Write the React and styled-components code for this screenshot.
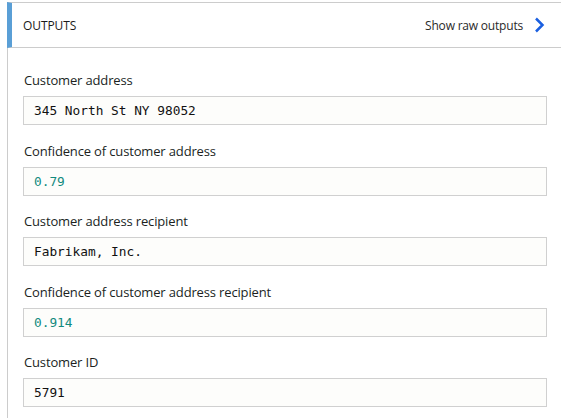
import styled, { createGlobalStyle } from "styled-components";

const GlobalStyle = createGlobalStyle`
  body {
    margin: 0;
    background: #ffffff;
    font-family: "Open Sans", "Noto Sans", sans-serif;
  }
`;

const Panel = styled.section`
  margin: 2px 0 0 7px;
  border-left: 1px solid #cccccc;
  min-height: 416px;
`;

const Header = styled.header`
  display: flex;
  align-items: center;
  justify-content: space-between;
  height: 44px;
  border-top: 1px solid #cccccc;
  border-bottom: 1px solid #cccccc;
  border-left: 5px solid #5a9fd6;
  margin-left: -1px;
  padding: 0 16px 0 11px;
`;

const Title = styled.h2`
  margin: 0;
  font-size: 12px;
  font-weight: 400;
  color: #1a1a1a;
  letter-spacing: -0.1px;
`;

const RawLink = styled.button`
  display: flex;
  align-items: center;
  gap: 10px;
  border: none;
  background: none;
  padding: 0;
  font-family: inherit;
  font-size: 12px;
  color: #2a2a2a;
  letter-spacing: -0.2px;
  cursor: pointer;
`;

const Body = styled.div`
  display: flex;
  flex-direction: column;
  gap: 16.5px;
  padding: 23px 14px 0 15px;
`;

const Field = styled.div`
  display: flex;
  flex-direction: column;
  gap: 7px;
`;

const Label = styled.label`
  font-size: 13px;
  line-height: 18px;
  color: #201f1e;
  letter-spacing: -0.15px;
  padding-left: 1px;
`;

const Value = styled.div`
  box-sizing: border-box;
  height: 29px;
  display: flex;
  align-items: center;
  padding: 0 10px;
  border: 1px solid #d0d0d0;
  background: #fdfdfb;
  font-family: "DejaVu Sans Mono", "Liberation Mono", monospace;
  font-size: 12.8px;
  color: ${(p) => (p.$number ? "#128a7e" : "#111111")};
`;

function Chevron() {
  return (
    <svg width="12" height="16" viewBox="0 0 12 16">
      <path
        d="M3 1.5 L9.5 8 L3 14.5"
        fill="none"
        stroke="#1a5fe0"
        strokeWidth="2.5"
      />
    </svg>
  );
}

const outputs = [
  { label: "Customer address", value: "345 North St NY 98052" },
  { label: "Confidence of customer address", value: "0.79", number: true },
  { label: "Customer address recipient", value: "Fabrikam, Inc." },
  {
    label: "Confidence of customer address recipient",
    value: "0.914",
    number: true,
  },
  { label: "Customer ID", value: "5791" },
];

export default function App() {
  return (
    <>
      <GlobalStyle />
      <Panel>
        <Header>
          <Title>OUTPUTS</Title>
          <RawLink>
            Show raw outputs
            <Chevron />
          </RawLink>
        </Header>
        <Body>
          {outputs.map((o) => (
            <Field key={o.label}>
              <Label>{o.label}</Label>
              <Value $number={o.number}>{o.value}</Value>
            </Field>
          ))}
        </Body>
      </Panel>
    </>
  );
}
